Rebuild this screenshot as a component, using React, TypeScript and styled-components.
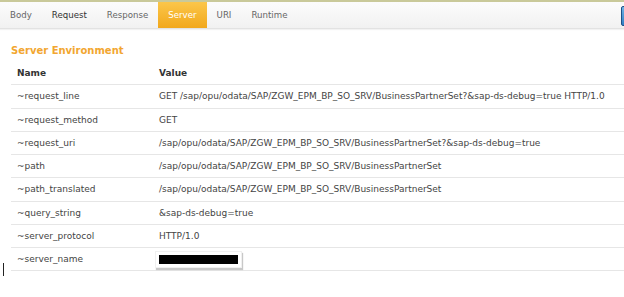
import React from "react";
import styled, { createGlobalStyle } from "styled-components";

const Global = createGlobalStyle`
  html, body { margin: 0; padding: 0; background: #fff; }
  body { font-family: "DejaVu Sans", Verdana, sans-serif; font-size: 9px; color: #444; }
`;

const Page = styled.div`
  position: relative;
  width: 624px;
  height: 297px;
  overflow: hidden;
  background: #fff;
`;

const TabBar = styled.div`
  display: flex;
  align-items: stretch;
  height: 26px;
  border-top: 2px solid #c9c99a;
  border-bottom: 1px solid #e2e2e2;
  background: linear-gradient(#fcfcfc, #f1f1f1);
  box-shadow: 0 1px 1px #f2f2f2;
`;

const Tab = styled.div<{ $active?: boolean; $strong?: boolean }>`
  display: flex;
  align-items: center;
  padding: 0 10px 0 10px;
  color: ${(p) => (p.$active ? "#fff" : p.$strong ? "#333" : "#666")};
  background: ${(p) => (p.$active ? "linear-gradient(#fbc64a, #f2a81c)" : "transparent")};
  font-size: 8.65px;
  white-space: nowrap;
`;

const Spacer = styled.div`
  flex: 1;
`;

const EdgeIcon = styled.div`
  width: 14px;
  margin: 4px -13px 2px 0;
  border-radius: 2px;
  background: linear-gradient(#6fb3e6, #2f7fc4);
  border: 1px solid #1e4f86;
`;

const Section = styled.div`
  padding: 15px 0 0 11px;
`;

const Title = styled.div`
  font-weight: bold;
  color: #f2a630;
  font-size: 10px;
  height: 14px;
  line-height: 14px;
  margin-bottom: 4px;
`;

const Table = styled.div`
  display: grid;
  grid-template-columns: 142px 1fr;
`;

const Row = styled.div<{ $header?: boolean }>`
  display: contents;
  & > div {
    height: 23.25px;
    box-sizing: border-box;
    border-bottom: 1px solid #e6e6e6;
    ${(p) => (p.$header ? "font-weight: bold; color: #333;" : "")}
  }
`;

const Cell = styled.div`
  display: flex;
  align-items: center;
  padding-left: 6px;
  white-space: nowrap;
`;

const Redacted = styled.div`
  position: relative;
  width: 79px;
  height: 9px;
  margin-left: -4px;
  padding: 3px;
  background: #fff;
  box-shadow: 1px 2px 1px #c8c8c8;
  border: 1px solid #f0f0f0;
  & > span {
    display: block;
    width: 79px;
    height: 9px;
    background: #000;
  }
`;

const Caret = styled.div`
  position: absolute;
  left: 3px;
  top: 263px;
  width: 1px;
  height: 13px;
  background: #222;
`;

const rows: [string, string][] = [
  ["~request_line", "GET /sap/opu/odata/SAP/ZGW_EPM_BP_SO_SRV/BusinessPartnerSet?&sap-ds-debug=true HTTP/1.0"],
  ["~request_method", "GET"],
  ["~request_uri", "/sap/opu/odata/SAP/ZGW_EPM_BP_SO_SRV/BusinessPartnerSet?&sap-ds-debug=true"],
  ["~path", "/sap/opu/odata/SAP/ZGW_EPM_BP_SO_SRV/BusinessPartnerSet"],
  ["~path_translated", "/sap/opu/odata/SAP/ZGW_EPM_BP_SO_SRV/BusinessPartnerSet"],
  ["~query_string", "&sap-ds-debug=true"],
  ["~server_protocol", "HTTP/1.0"],
];

export default function App() {
  return (
    <Page>
      <Global />
      <TabBar>
        <Tab>Body</Tab>
        <Tab $strong>Request</Tab>
        <Tab>Response</Tab>
        <Tab $active>Server</Tab>
        <Tab>URI</Tab>
        <Tab>Runtime</Tab>
        <Spacer />
        <EdgeIcon />
      </TabBar>
      <Section>
        <Title>Server Environment</Title>
        <Table>
          <Row $header>
            <Cell>Name</Cell>
            <Cell>Value</Cell>
          </Row>
          {rows.map(([n, v]) => (
            <Row key={n}>
              <Cell>{n}</Cell>
              <Cell>{v}</Cell>
            </Row>
          ))}
          <Row>
            <Cell>~server_name</Cell>
            <Cell>
              <Redacted>
                <span />
              </Redacted>
            </Cell>
          </Row>
        </Table>
      </Section>
      <Caret />
    </Page>
  );
}
